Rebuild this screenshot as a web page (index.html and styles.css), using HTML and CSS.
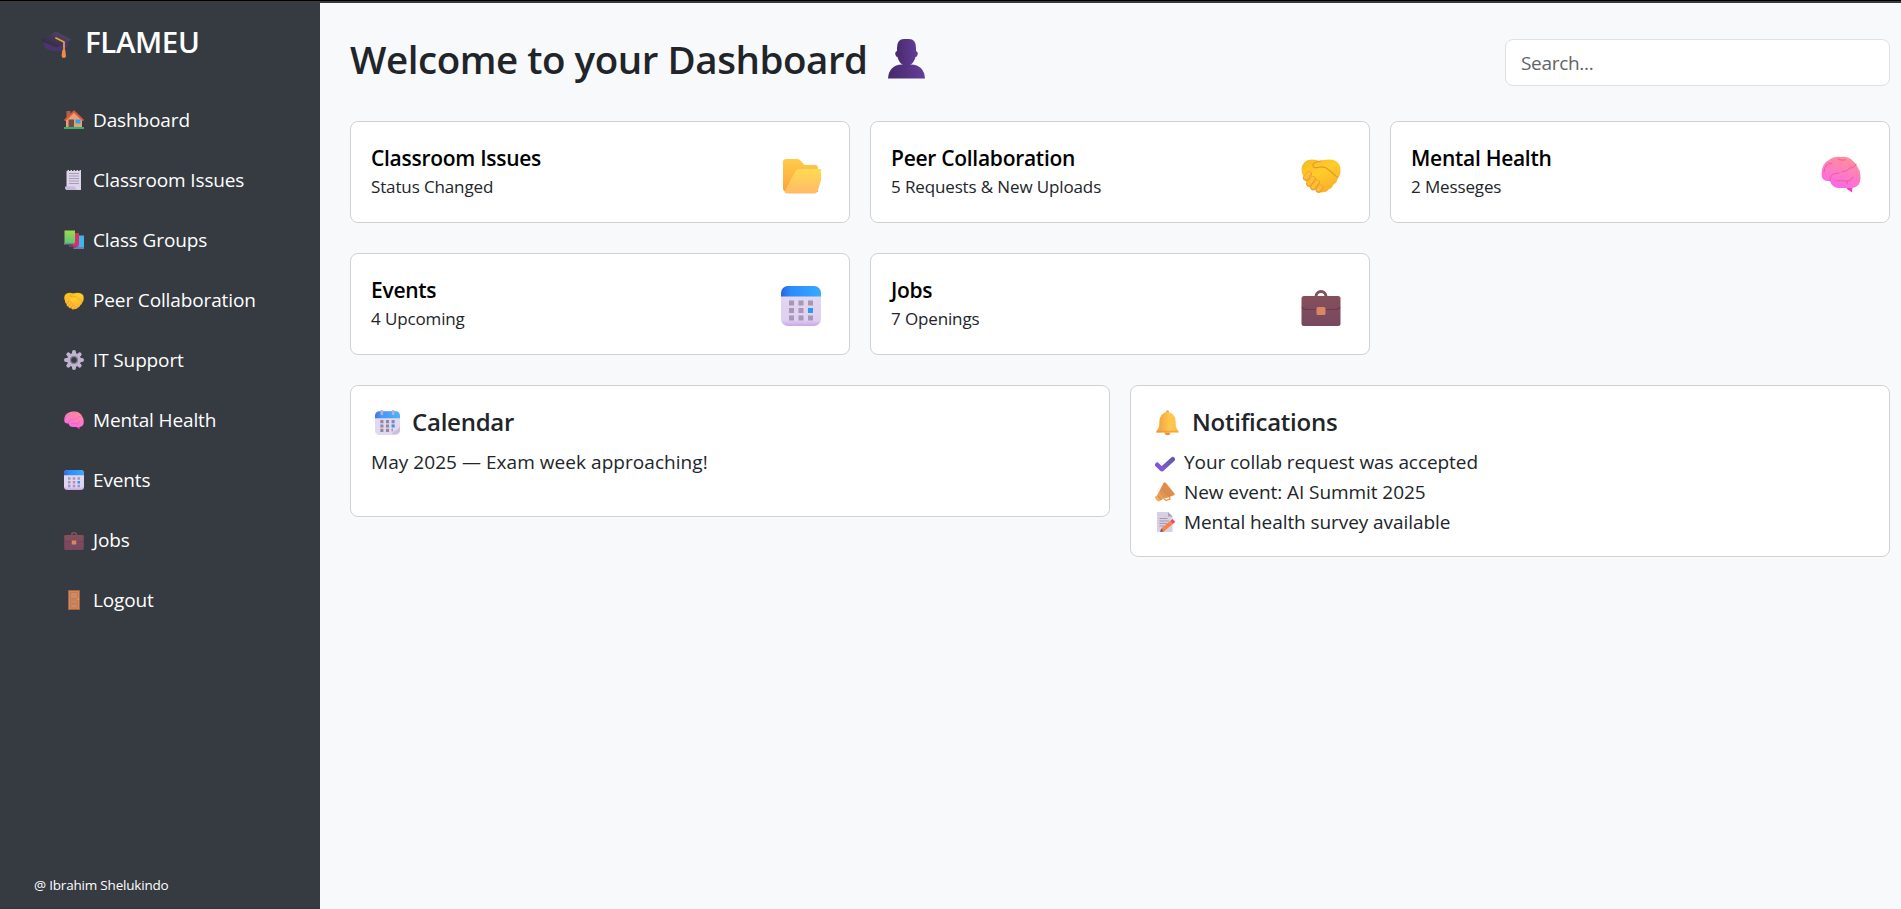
FILE: index.html
```html
<!DOCTYPE html>
<html lang="en">
<head>
<meta charset="utf-8">
<title>Flameu Dashboard</title>
<link rel="stylesheet" href="styles.css">
</head>
<body>
<svg class="sprite" aria-hidden="true">
  <defs>
    <linearGradient id="gYellow" x1="0" y1="0" x2="0.6" y2="1"><stop offset="0" stop-color="#f9b821"/><stop offset=".5" stop-color="#ffcc2b"/><stop offset="1" stop-color="#f9b02a"/></linearGradient>
    <linearGradient id="gFolder" x1="0" y1="0" x2="0" y2="1"><stop offset="0" stop-color="#ffdb50"/><stop offset="1" stop-color="#ffba68"/></linearGradient>
    <linearGradient id="gFolderBack" x1="0" y1="0" x2="0" y2="1"><stop offset="0" stop-color="#ffcb4b"/><stop offset="1" stop-color="#fba53c"/></linearGradient>
    <linearGradient id="gBrain" x1=".8" y1="0" x2=".4" y2="1"><stop offset="0" stop-color="#ff8f96"/><stop offset=".45" stop-color="#ff80b8"/><stop offset="1" stop-color="#fd66ea"/></linearGradient>
    <linearGradient id="gBlue" x1="0" y1="0" x2="1" y2="0"><stop offset="0" stop-color="#2f62dc"/><stop offset=".25" stop-color="#2c8cfb"/><stop offset="1" stop-color="#35aaff"/></linearGradient>
    <linearGradient id="gPaper" x1="0" y1="0" x2="0" y2="1"><stop offset="0" stop-color="#e3d9f0"/><stop offset=".85" stop-color="#dfd0f1"/><stop offset="1" stop-color="#c9a6e8"/></linearGradient>
    <linearGradient id="gCase" x1="0" y1="0" x2="0" y2="1"><stop offset="0" stop-color="#864f5b"/><stop offset="1" stop-color="#764860"/></linearGradient>
    <linearGradient id="gUser" x1="0" y1="0" x2="1" y2="0"><stop offset="0" stop-color="#47286c"/><stop offset="1" stop-color="#643e99"/></linearGradient>
    <linearGradient id="gBell" x1="0" y1="0" x2="1" y2="0"><stop offset="0" stop-color="#f29a3c"/><stop offset=".6" stop-color="#ffc84c"/><stop offset="1" stop-color="#ffb94e"/></linearGradient>
    <linearGradient id="gCap" x1="0" y1="1" x2="1" y2="0"><stop offset="0" stop-color="#2b2338"/><stop offset="1" stop-color="#5b4d70"/></linearGradient>
    <linearGradient id="gCheck" x1="0" y1="1" x2="1" y2="0"><stop offset="0" stop-color="#8257e4"/><stop offset="1" stop-color="#6657a8"/></linearGradient>
    <linearGradient id="gHorn" x1="0" y1="1" x2="1" y2="0"><stop offset="0" stop-color="#ffb85e"/><stop offset=".5" stop-color="#d98b4e"/><stop offset="1" stop-color="#f48d43"/></linearGradient>
    <linearGradient id="gGreen" x1="0" y1="0" x2="0" y2="1"><stop offset="0" stop-color="#9bdb4c"/><stop offset="1" stop-color="#62c474"/></linearGradient>
  </defs>
  <symbol id="folder" viewBox="0 0 40 40">
    <path fill="url(#gFolderBack)" d="M2 8a3 3 0 0 1 3-3h11c2 0 3 .8 4 2l3.500 4H34a3 3 0 0 1 3 3v24H6a4 4 0 0 1-4-4z"/>
    <path fill="url(#gFolder)" d="M14 18q1.200-3 4-3h22q3.200 0 2.500 3l-5.500 18q-1 3.500-4 3.500H7Q3 39.500 4.200 36.500z"/>
  </symbol>
  <symbol id="handshake" viewBox="0 0 40 40">
    <path fill="url(#gYellow)" d="M.5 16Q.5 6 11 5.500q4 0 8 1.500 3-1.500 9-1.500Q39.500 6 39.500 16q0 6-3 9-.500 4-4 5.500-1.500 4-5 5-2 3-5 2.500-4 2-8-2.500Q5 30 3.500 25 .500 20 .5 16z"/>
    <path fill="none" stroke="#e39a2a" stroke-width="1.200" stroke-linecap="round" d="M20 7q-6 .5-8 3.500-1 4 5 3 6-2 11 2.500l8 7"/>
    <path stroke="#f09a2b" stroke-width="5.800" stroke-linecap="round" d="m5 24 3-4m0 10 4-5m0 8.500 4-5m1.500 7.500 2-2.500"/>
    <path stroke="#ffbf37" stroke-width="4" stroke-linecap="round" d="m5 23.500 3-4m0 10 4-5m0 8.500 4-5m1.500 7.500 2-2.500"/>
  </symbol>
  <symbol id="brain" viewBox="0 0 40 40">
    <path fill="#f43fb5" d="m25 32 1 3 5 3.500.5-7z"/>
    <path fill="url(#gBrain)" d="M.5 20Q1 9 8 6q5-4 12-3 7-1 12 4 4 3 5 7 2.500 3 2.500 10 0 9-8.500 10H18q-7 0-9-7Q.5 28 .5 20z"/>
    <path fill="none" stroke="#e65fa0" stroke-width="1" stroke-linecap="round" d="M3 18q0-8 8-9m-2 18q-1-8 9-8m3-1q6-1 8-4 5 0 6-4M17 5q4 2 7 1M15 27q5-1 9 0 6 1 8-4m-6 4v3"/>
  </symbol>
  <symbol id="calendar" viewBox="0 0 40 40">
    <rect width="40" height="40" rx="7" fill="url(#gPaper)"/>
    <path fill="url(#gBlue)" d="M0 10.500V7a7 7 0 0 1 7-7h26a7 7 0 0 1 7 7v3.500z"/>
    <path fill="#a598b4" d="M8 14.500h5v5H8zm9.500 0h5v5h-5zm9.500 0h5v5h-5zM8 22h5v5H8zm9.500 0h5v5h-5zM8 29.500h5v5H8zm9.500 0h5v5h-5zm9.500 0h5v5h-5z"/>
    <path fill="#2f97fa" d="M27 22h5v5h-5z"/>
  </symbol>
  <symbol id="tearoff" viewBox="0 0 40 40">
    <rect y="2" width="40" height="38" rx="7" fill="#e2d9ee"/>
    <path fill="url(#gBlue)" opacity=".85" d="M0 13V9a7 7 0 0 1 7-7h26a7 7 0 0 1 7 7v4z"/>
    <path fill="#b9b1c4" d="M9 0h4v8H9zm18 0h4v8h-4z"/>
    <path fill="#9188a3" d="M8.500 16h5v5h-5zm9 0h5v5h-5zm9 0h5v5h-5zm-18 7h5v5h-5zm9 0h5v5h-5zm-9 7h5v5h-5zm9 0h5v5h-5zm9 0h2v4h-2z"/>
    <path fill="#3f94e8" d="M26.500 23h5v5h-5z"/>
    <path fill="#cabfda" d="M27 39q2-6 6-6 5-3 7-7v8q-4 6-13 5z"/>
  </symbol>
  <symbol id="briefcase" viewBox="0 0 40 40">
    <path fill="none" stroke="#81525a" stroke-width="3" d="M15 12V10.500a5 5 0 0 1 10 0V12"/>
    <rect x=".5" y="10" width="39" height="30" rx="2.500" fill="url(#gCase)"/>
    <path fill="none" stroke="#6c3856" stroke-width="1.200" d="M1 21q1 2.500 4 2.500h30q3 0 4-2.500"/>
    <rect x="15.500" y="21" width="9" height="8" rx="1.500" fill="#d98566"/>
  </symbol>
  <symbol id="house" viewBox="0 0 40 40">
    <path fill="#9b6a4d" d="M5 2h8v16H5z"/>
    <path fill="#dfa577" d="M4 17 20 3l16 14v18H4z"/>
    <path fill="none" stroke="#e8503a" stroke-width="4" stroke-linecap="round" stroke-linejoin="round" d="M2.500 20 20 3l17.500 17"/>
    <path fill="#754a45" d="M9 19h11v16H9z"/>
    <path fill="#2fa1f3" d="M23 19h10v8H23z"/>
    <path fill="#3cae68" d="M0 34h40v4H0z"/>
  </symbol>
  <symbol id="receipt" viewBox="0 0 40 40">
    <path fill="#ddd4ea" d="M5 2h2V0h3v2h3V0h3v2h3V0h3v2h3V0h3v2h3V0h3v40H5q-3-1-3-6h3z"/>
    <path fill="#c9b8df" d="M2 33h20q0 5 4 7H6q-4-1-4-7z"/>
    <path fill="#a79cb5" d="M10 6h20v2H10zm0 5h20v2H10zm0 5h20v2H10zm0 5h20v2H10zm0 5h20v2H10z"/>
  </symbol>
  <symbol id="books" viewBox="0 0 40 40">
    <path fill="#3cb5f0" d="M25 11h15v24H25z"/><path fill="#9d8bd0" d="M19 35h21v2.500H19z"/>
    <path fill="#dd2e62" d="M14 6h16v25l-12 2z"/><path fill="#b03787" d="M10 31h19v2.500H10z"/>
    <path fill="url(#gGreen)" d="M1 1h21v25H1z"/><path fill="#6c8e8c" d="M0 26h20v3H0z"/>
  </symbol>
  <symbol id="gear" viewBox="0 0 40 40">
    <g stroke="#c0b3cf" stroke-width="8" stroke-linecap="round"><path d="M20 4v32M4 20h32M8.700 8.700l22.600 22.600M31.300 8.700 8.700 31.300"/></g>
    <circle cx="20" cy="20" r="14" fill="#c0b3cf"/><circle cx="20" cy="20" r="8" fill="#827790"/><circle cx="20" cy="20" r="5.500" fill="#363a41"/>
  </symbol>
  <symbol id="door" viewBox="0 0 40 40">
    <path fill="#a9623f" d="M8 0h24v40H8z"/><path fill="#cf8a63" d="M10 2h20v36H10z"/>
    <path fill="none" stroke="#b87352" stroke-width="1.300" d="M13 5h14v12H13zm0 15h14v6H13zm0 9h14v7H13z"/><circle cx="28.500" cy="18" r="1.700" fill="#f5ad34"/>
  </symbol>
  <symbol id="gradcap" viewBox="0 0 30 28">
    <path fill="#4b3570" d="M3 10h24v5q-2 5-12 5T3 15z"/>
    <path fill="url(#gCap)" d="M15 .5 29.500 8q.5 1 0 1.500L17 16q-1.500.700-3 0L.5 10Q0 9 .5 8.500z"/>
    <path fill="none" stroke="#e5a342" stroke-width="1.700" stroke-linecap="round" stroke-linejoin="round" d="m15 7 8 4v9"/>
    <path fill="#f08a4f" d="M21.300 19h3l.7 6q-.2 2-2.200 2t-2.200-2z"/>
  </symbol>
  <symbol id="user" viewBox="0 0 37 40">
    <path fill="url(#gUser)" d="M9 9q0-9 7-9h5q7 0 7 9v3q2.500 1 1.500 4-.5 2-2 2-1 5-5.500 8h-7Q10.500 23 9.500 18q-1.500 0-2-2-1-3 1.500-4z"/>
    <path fill="url(#gUser)" d="M0 39.500q1-13.500 14-14h9q13 .5 14 14z"/>
  </symbol>
  <symbol id="bell" viewBox="0 0 40 40">
    <circle cx="20" cy="35" r="5" fill="#ed8f4b"/><circle cx="20" cy="3" r="2.500" fill="#f5a23d"/>
    <path fill="url(#gBell)" d="M6 28q1-2 1-10Q8 4 20 3q12 1 13 15 0 8 1 10 1 3 3.500 5 2 3-.5 3.500H3Q.5 36 2.500 33 5 31 6 28z"/>
    <path stroke="#f08f43" stroke-width="1.300" d="M4 34h32"/>
  </symbol>
  <symbol id="check" viewBox="0 0 40 40">
    <path fill="none" stroke="url(#gCheck)" stroke-width="9" stroke-linecap="round" stroke-linejoin="round" d="m4.500 25.500 9 9 22-20"/>
  </symbol>
  <symbol id="megaphone" viewBox="0 0 40 40">
    <path fill="none" stroke="#f1a04d" stroke-width="3" d="m18 34 4 3 8-3-2-7"/>
    <path fill="url(#gHorn)" d="M17 2q3-3 5 0l17 21q1 3-2 4l-23 8-6 4q-5 0-8-8 0-3 4-4z"/>
    <path stroke="#b87847" stroke-width="1.500" d="m5 27 8 9"/>
  </symbol>
  <symbol id="memo" viewBox="0 0 40 40">
    <path fill="#d8cfe3" d="M4 0h22l9 9v31H4z"/><path fill="#a99fb6" d="M26 0v9h9z"/>
    <path fill="#a399af" d="M9 12h16v2H9zm0 5h19v2H9zm0 5h16v2H9zm0 5h10v2H9z"/>
    <path stroke="#fa8045" stroke-width="8" d="m15 36 18-15"/><path stroke="#e84b5d" stroke-width="8" d="m33 21 5-4"/><path fill="#73516e" d="m10 40 2.500-7 5 6z"/>
  </symbol>
</svg>

<div class="window-edge"></div>
<div class="app">
  <aside class="sidebar">
    <div class="brand"><svg class="brand-icon"><use href="#gradcap"/></svg><span class="brand-name">FLAMEU</span></div>
    <nav class="nav">
      <a class="nav-link"><svg class="icon-sm"><use href="#house"/></svg><span>Dashboard</span></a>
      <a class="nav-link"><svg class="icon-sm"><use href="#receipt"/></svg><span>Classroom Issues</span></a>
      <a class="nav-link"><svg class="icon-sm"><use href="#books"/></svg><span>Class Groups</span></a>
      <a class="nav-link"><svg class="icon-sm"><use href="#handshake"/></svg><span>Peer Collaboration</span></a>
      <a class="nav-link"><svg class="icon-sm"><use href="#gear"/></svg><span>IT Support</span></a>
      <a class="nav-link"><svg class="icon-sm"><use href="#brain"/></svg><span>Mental Health</span></a>
      <a class="nav-link"><svg class="icon-sm"><use href="#calendar"/></svg><span>Events</span></a>
      <a class="nav-link"><svg class="icon-sm"><use href="#briefcase"/></svg><span>Jobs</span></a>
      <a class="nav-link"><svg class="icon-sm"><use href="#door"/></svg><span>Logout</span></a>
    </nav>
    <footer class="credit">@ Ibrahim Shelukindo</footer>
  </aside>

  <main class="main">
    <header class="header">
      <h1 class="title">Welcome to your Dashboard</h1>
      <svg class="title-icon"><use href="#user"/></svg>
      <input class="search" type="text" placeholder="Search...">
    </header>

    <section class="cards">
      <article class="card"><div class="card-text"><h2 class="card-title">Classroom Issues</h2><p class="card-sub">Status Changed</p></div><svg class="icon-lg"><use href="#folder"/></svg></article>
      <article class="card"><div class="card-text"><h2 class="card-title">Peer Collaboration</h2><p class="card-sub">5 Requests &amp; New Uploads</p></div><svg class="icon-lg"><use href="#handshake"/></svg></article>
      <article class="card"><div class="card-text"><h2 class="card-title">Mental Health</h2><p class="card-sub">2 Messeges</p></div><svg class="icon-lg"><use href="#brain"/></svg></article>
      <article class="card"><div class="card-text"><h2 class="card-title">Events</h2><p class="card-sub">4 Upcoming</p></div><svg class="icon-lg"><use href="#calendar"/></svg></article>
      <article class="card"><div class="card-text"><h2 class="card-title">Jobs</h2><p class="card-sub">7 Openings</p></div><svg class="icon-lg"><use href="#briefcase"/></svg></article>
    </section>

    <section class="panels">
      <article class="panel panel-calendar">
        <h2 class="panel-title"><svg class="icon-md"><use href="#tearoff"/></svg><span>Calendar</span></h2>
        <p class="panel-line">May 2025 — Exam week approaching!</p>
      </article>
      <article class="panel panel-notifications">
        <h2 class="panel-title"><svg class="icon-md"><use href="#bell"/></svg><span>Notifications</span></h2>
        <ul class="notices">
          <li class="notice"><svg class="icon-sm"><use href="#check"/></svg><span>Your collab request was accepted</span></li>
          <li class="notice"><svg class="icon-sm"><use href="#megaphone"/></svg><span>New event: AI Summit 2025</span></li>
          <li class="notice"><svg class="icon-sm"><use href="#memo"/></svg><span>Mental health survey available</span></li>
        </ul>
      </article>
    </section>
  </main>
</div>
</body>
</html>
```
FILE: styles.css
```css
* { box-sizing: border-box; }

body {
  margin: 0;
  height: 909px;
  overflow: hidden;
  display: flex;
  flex-direction: column;
  background: #f8f9fb;
  color: #212529;
  font-family: "Open Sans", "Noto Sans", sans-serif;
  font-size: 19px;
  line-height: 30px;
}

h1, h2, p, ul { margin: 0; padding: 0; }
svg { display: block; flex: none; overflow: visible; }
.sprite { position: absolute; width: 0; height: 0; }

.window-edge {
  flex: none;
  height: 3px;
  background: #3a3a3d;
  border-top: 1px solid #000;
}

.app { flex: 1; display: flex; }

.sidebar {
  width: 320px;
  flex: none;
  display: flex;
  flex-direction: column;
  background: #363a41;
  border-bottom: 2px solid #37363f;
  color: #fff;
}

.brand { display: flex; align-items: flex-start; gap: 14px; height: 84px; padding: 24px 0 0 41px; }
.brand-icon { width: 30px; height: 28px; margin-top: 4px; }
.brand-name { font-size: 29.500px; font-weight: 600; letter-spacing: -0.4px; }

.nav { display: flex; flex-direction: column; padding-left: 64px; padding-top: 3px; letter-spacing: -0.13px; }
.nav-link { display: flex; align-items: center; gap: 9px; height: 60px; }
.icon-sm { width: 20px; height: 20px; }

.credit { margin-top: auto; padding: 0 0 7px 34px; font-size: 13.500px; letter-spacing: -0.2px; }

.main { flex: 1; padding: 36px 11px 0 30px; }

.header { display: flex; height: 82px; align-items: flex-start; }
.title { font-size: 38.500px; line-height: 40px; font-weight: 600; letter-spacing: -0.45px; }
.title-icon { width: 37px; height: 40px; margin-left: 20px; }
.search {
  width: 385px;
  height: 47px;
  margin-left: auto;
  padding: 0 15px;
  border: 1px solid #dee2e6;
  border-radius: 8px;
  background: #fff;
  font: inherit;
  letter-spacing: -0.3px;
}
.search::placeholder { color: #5f6469; opacity: 1; }

.cards { display: grid; grid-template-columns: repeat(3, 500px); column-gap: 20px; row-gap: 30px; }
.card {
  display: flex;
  justify-content: space-between;
  height: 102px;
  padding: 20px 28px 0 20px;
  background: #fff;
  border: 1px solid #cfd1d3;
  border-radius: 8px;
}
.card-title { font-size: 21px; line-height: 32px; font-weight: 600; color: #000; letter-spacing: -0.28px; }
.card-sub { font-size: 17px; line-height: 26px; letter-spacing: -0.13px; }
.icon-lg { width: 40px; height: 40px; margin-top: 12px; }

.panels { display: flex; align-items: flex-start; gap: 20px; margin-top: 30px; }
.panel {
  width: 760px;
  padding: 21px 20px;
  background: #fff;
  border: 1px solid #cfd1d3;
  border-radius: 8px;
}
.panel-calendar { height: 132px; }
.panel-notifications { height: 172px; }
.panel-title { display: flex; align-items: center; gap: 12px; padding-left: 4px; height: 30px; margin-bottom: 10px; font-size: 24px; font-weight: 600; letter-spacing: -0.25px; }
.panel-line { letter-spacing: 0.05px; }
.icon-md { width: 25px; height: 25px; }
.notices { list-style: none; padding-left: 4px; letter-spacing: -0.07px; }
.notice { display: flex; align-items: center; gap: 9px; height: 30px; }
```
